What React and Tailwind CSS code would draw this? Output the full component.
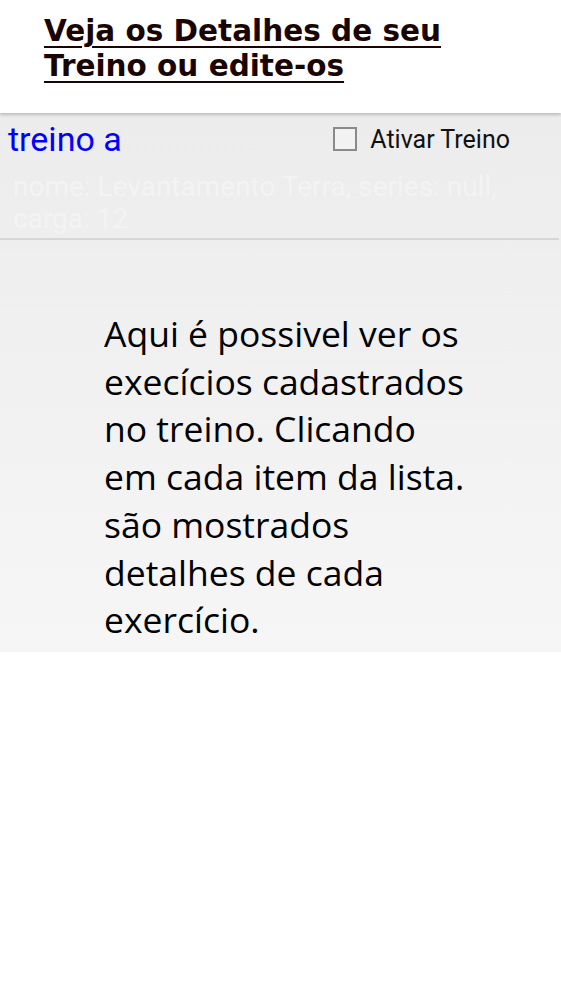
export default function App() {
  return (
    <div className="w-[561px] h-[997px] bg-white relative">
      <div className="h-[113px] bg-white pl-[44px] pt-[14px] relative z-10 shadow-[0_2px_3px_rgba(0,0,0,0.2)]">
        <h1 className="font-['DejaVu_Sans',sans-serif] font-bold text-[29.5px] leading-[35px] text-[#1a0505] underline underline-offset-[5px] decoration-[2px]">
          Veja os Detalhes de seu
          <br />
          Treino ou edite-os
        </h1>
      </div>
      <div className="h-[539px] bg-gradient-to-b from-[#ececec] to-[#f6f6f6] font-['Roboto',sans-serif]">
        <div className="flex items-center h-[52px] pl-[8px]">
          <span className="text-[34px] text-[#0000ff] leading-none">treino a</span>
          <div className="ml-auto mr-[51px] flex items-center">
            <span className="w-[24px] h-[24px] border-2 border-[#8a8a8a] bg-[#f2f2f2]"></span>
            <span className="ml-[13px] text-[25px] leading-none text-[#111]">Ativar Treino</span>
          </div>
        </div>
        <div className="pl-[13px] pr-[20px] pt-[6px] text-[28px] leading-[32px] text-[#f3f3f3] h-[73px]">
          nome: Levantamento Terra, series: null, carga: 12
        </div>
        <div className="h-[2px] bg-[#d6d6d6] mr-[2px]"></div>
        <p className="ml-[104px] w-[372px] mt-[70px] font-['Open_Sans',sans-serif] text-[35.5px] leading-[47.7px] text-black">
          Aqui é possivel ver os execícios cadastrados no treino. Clicando em cada item da lista. são mostrados detalhes de cada exercício.
        </p>
      </div>
    </div>
  );
}
